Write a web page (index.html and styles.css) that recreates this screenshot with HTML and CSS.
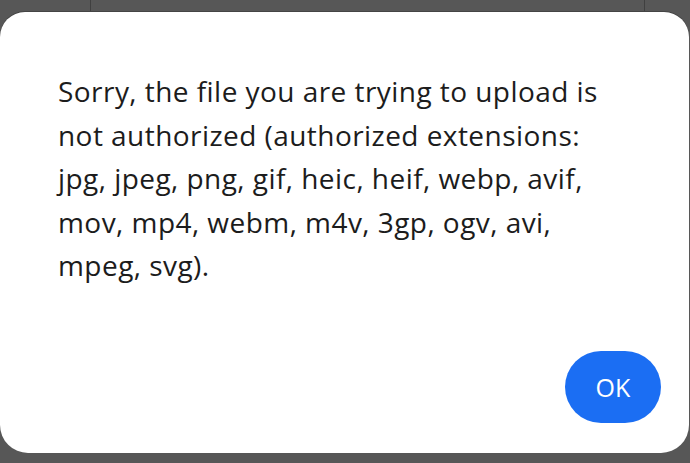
FILE: index.html
```html
<!DOCTYPE html>
<html lang="en">
<head>
<meta charset="utf-8">
<title>Upload error</title>
<link rel="stylesheet" href="styles.css">
</head>
<body>
<div class="backdrop"><div class="behind"></div></div>
<div class="dialog" role="alertdialog">
  <p class="message">Sorry, the file you are trying to upload is not authorized (authorized extensions: jpg, jpeg, png, gif, heic, heif, webp, avif, mov, mp4, webm, m4v, 3gp, ogv, avi, mpeg, svg).</p>
  <div class="actions"><button class="ok">OK</button></div>
</div>
</body>
</html>
```
FILE: styles.css
```css
html, body {
  margin: 0;
  padding: 0;
  height: 100%;
}
body {
  background: #575757;
  font-family: "Open Sans", "Roboto", sans-serif;
  overflow: hidden;
}
.backdrop {
  height: 12px;
}
.behind {
  margin-left: 90px;
  width: 553px;
  height: 12px;
  border-left: 1px solid #404040;
  border-right: 1px solid #404040;
}
.dialog {
  width: 689px;
  height: 441px;
  box-sizing: border-box;
  background: #fff;
  border-radius: 25px 25px 28px 28px;
  box-shadow: 0 -1px 0 #444;
  padding: 58px 28px 30px 58px;
  display: flex;
  flex-direction: column;
}
.message {
  margin: 0;
  width: 560px;
  font-size: 28px;
  letter-spacing: 0.45px;
  line-height: 43.5px;
  color: #1c1c1c;
}
.actions {
  margin-top: auto;
  display: flex;
  justify-content: flex-end;
}
.ok {
  width: 96px;
  height: 72px;
  border: none;
  border-radius: 36px;
  background: #1b6ef3;
  color: #fff;
  font-family: inherit;
  font-size: 25px;
  font-weight: 500;
  padding: 0;
}
```
